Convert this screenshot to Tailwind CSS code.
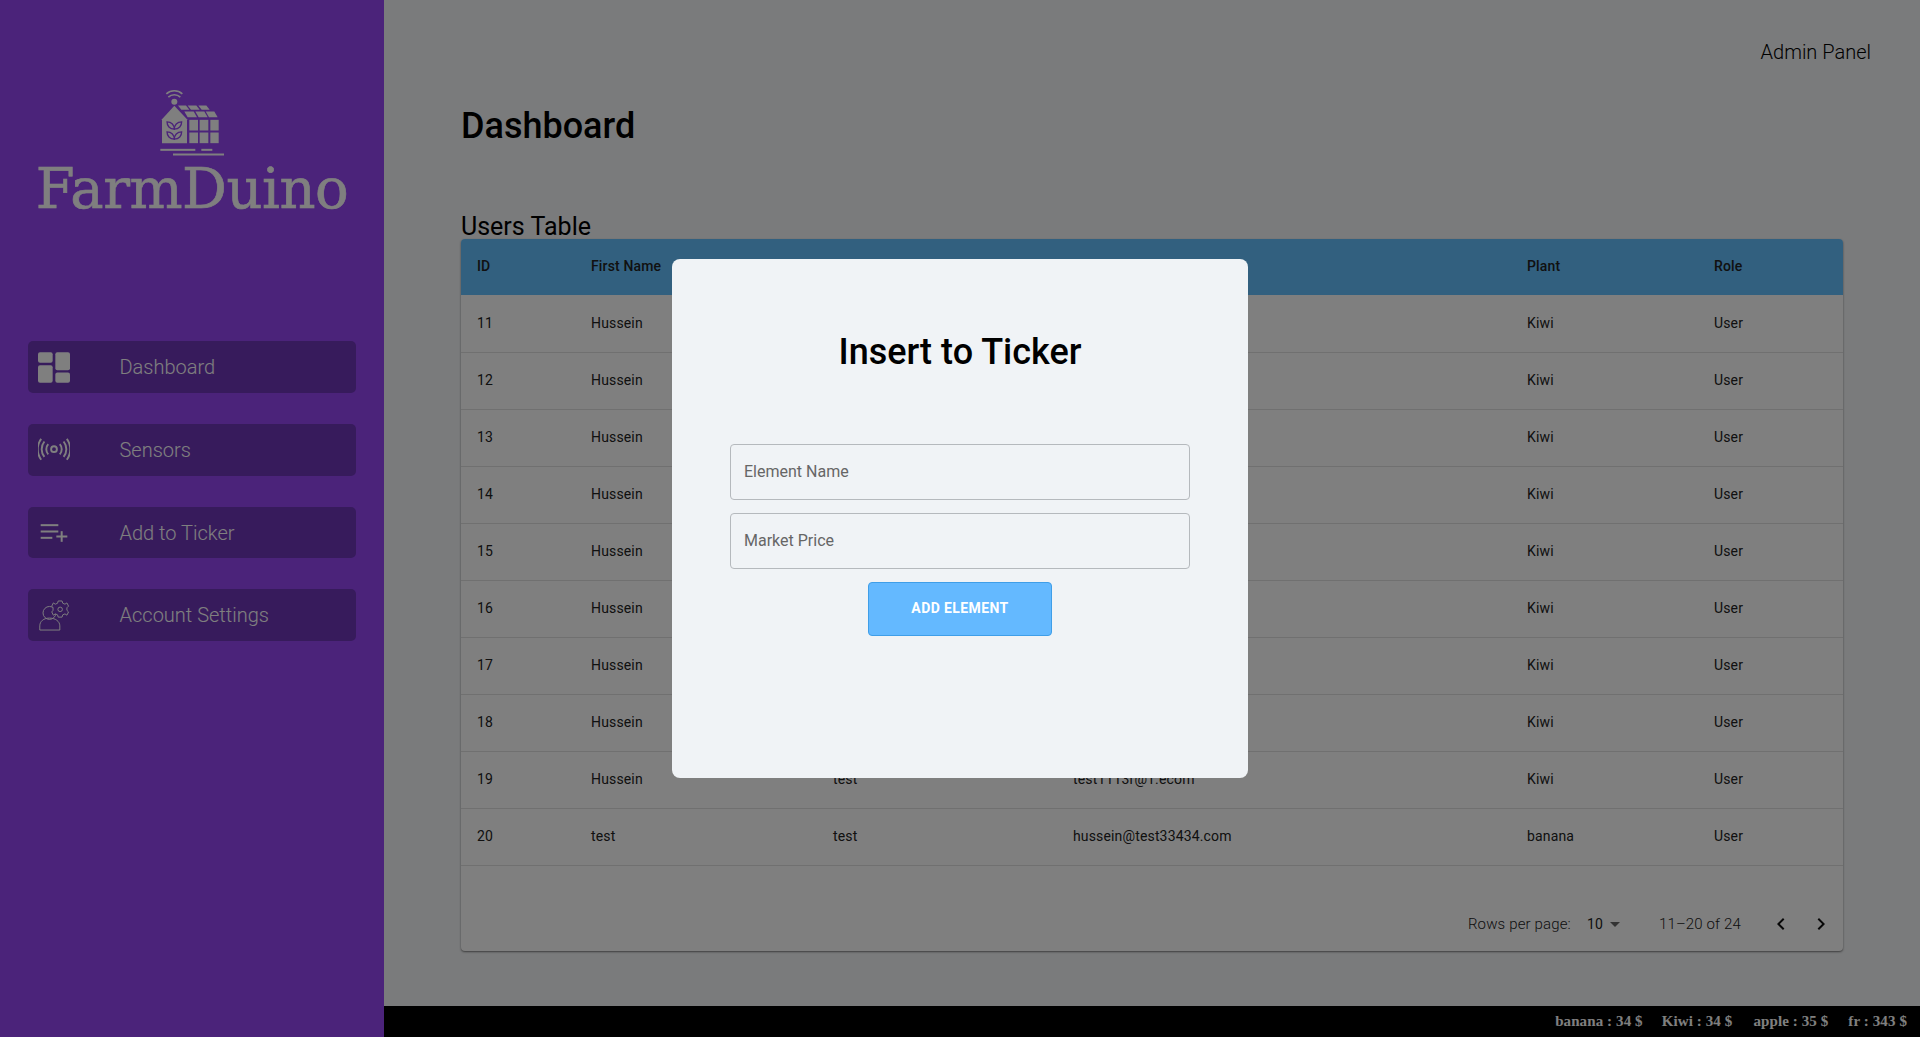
<!DOCTYPE html>
<html lang="en">
<head>
  <meta charset="UTF-8" />
  <meta name="viewport" content="width=device-width, initial-scale=1.0" />
  <title>FarmDuino Dashboard</title>
  <script src="https://cdn.jsdelivr.net/npm/@tailwindcss/browser@4"></script>
</head>
<body class="font-['Roboto',sans-serif] bg-[#f4f6f8] text-black overflow-hidden">

  <div class="relative flex h-[1037px] w-[1920px]">

    <!-- Sidebar -->
    <aside class="w-[384px] shrink-0 bg-[#9646f4] text-white flex flex-col">
      <div class="flex flex-col items-center pt-[88px] h-[341px]">
        <svg class="w-[70px] h-[72px]" viewBox="470 85 210 215" fill="#ffffff">
          <g fill="none" stroke="#ffffff" stroke-width="5">
            <path d="M498 102a36 36 0 0 1 48 0" />
            <path d="M504 112a26 26 0 0 1 36 0" />
          </g>
          <circle cx="522" cy="126" r="9" />
          <path d="M485 178L522 138L560 178V250H485Z" />
          <path d="M533 137H557L567 150H543Z" />
          <path d="M562 137H588L598 150H572Z" />
          <path d="M594 137H618L628 150H604Z" />
          <path d="M552 155H580L590 172H562Z" />
          <path d="M585 155H612L622 172H595Z" />
          <path d="M616 155H642L652 172H626Z" />
          <rect x="567" y="180" width="26" height="32" />
          <rect x="598" y="180" width="26" height="32" />
          <rect x="630" y="180" width="25" height="32" />
          <rect x="567" y="218" width="26" height="32" />
          <rect x="598" y="218" width="26" height="32" />
          <rect x="630" y="218" width="25" height="32" />
          <g fill="none" stroke="#9646f4" stroke-width="4">
            <path d="M522 208C508 208 500 198 500 186C514 186 522 196 522 208Z" />
            <path d="M522 208C536 208 544 198 544 186C530 186 522 196 522 208Z" />
            <path d="M522 238C508 238 500 228 500 216C514 216 522 226 522 238Z" />
            <path d="M522 238C536 238 544 228 544 216C530 216 522 226 522 238Z" />
          </g>
          <rect x="480" y="267" width="105" height="6" />
          <rect x="603" y="267" width="33" height="6" />
          <rect x="518" y="281" width="153" height="6" />
        </svg>
        <div class="font-['DejaVu_Serif',serif] text-[56px] leading-[60px] tracking-[-0.5px] font-normal -mt-[1px] [-webkit-text-stroke:0.6px_white]">FarmDuino</div>
      </div>

      <nav class="flex flex-col gap-[31px] px-[28px]">
        <a class="flex items-center h-[51.8px] rounded-[5px] bg-[#6e36b8] pl-[10px]">
          <span class="w-[32px] flex justify-center">
            <svg class="w-[32px] h-[31px] mt-[1px]" viewBox="114 96 96 92" fill="#ffffff">
              <rect x="114" y="96" width="44" height="32" rx="6" />
              <rect x="114" y="135" width="44" height="53" rx="6" />
              <rect x="166" y="96" width="44" height="54" rx="6" />
              <rect x="166" y="157" width="44" height="31" rx="6" />
            </svg>
          </span>
          <span class="ml-[49.5px] text-[20px] font-light">Dashboard</span>
        </a>
        <a class="flex items-center h-[51.8px] rounded-[5px] bg-[#6e36b8] pl-[10px]">
          <span class="w-[32px] flex justify-center">
            <svg class="w-[32px] h-[23px]" viewBox="112 354 100 70" fill="none" stroke="#ffffff" stroke-width="6">
              <circle cx="162" cy="388" r="9" />
              <path d="M144 372a24 24 0 0 0 0 32" />
              <path d="M180 372a24 24 0 0 1 0 32" />
              <path d="M132 364a38 38 0 0 0 0 48" />
              <path d="M192 364a38 38 0 0 1 0 48" />
              <path d="M122 356a54 54 0 0 0 0 65" />
              <path d="M202 356a54 54 0 0 1 0 65" />
            </svg>
          </span>
          <span class="ml-[49.5px] text-[20px] font-light">Sensors</span>
        </a>
        <a class="flex items-center h-[51.8px] rounded-[5px] bg-[#6e36b8] pl-[10px]">
          <span class="w-[32px] flex justify-center">
            <svg class="w-[32px] h-[27px]" viewBox="114 600 96 80" fill="none" stroke="#ffffff" stroke-width="6">
              <path d="M122 618H175" />
              <path d="M122 637H175" />
              <path d="M122 656H157" />
              <path d="M169 652H202" />
              <path d="M185 636V668" />
            </svg>
          </span>
          <span class="ml-[49.5px] pt-[1px] text-[20px] font-light">Add to Ticker</span>
        </a>
        <a class="flex items-center h-[51.8px] rounded-[5px] bg-[#6e36b8] pl-[10px]">
          <span class="w-[32px] flex justify-center">
            <svg class="w-[32px] h-[31px]" viewBox="114 838 96 96" fill="none" stroke="#ffffff" stroke-width="3">
              <circle cx="148" cy="878" r="20" />
              <path d="M118 931V918c0-14 12-24 30-24s32 10 32 24V931Z" />
              <path d="M175 841h12l2 7 7 3 6-4 5 10-5 5v8l5 5-5 10-6-4-7 3-2 7h-12l-2-7-7-3-6 4-5-10 4-5v-8l-4-5 5-10 6 4 7-3Z" fill="#6e36b8" />
              <circle cx="181" cy="867" r="7" />
            </svg>
          </span>
          <span class="ml-[49.5px] text-[20px] font-light">Account Settings</span>
        </a>
      </nav>
    </aside>

    <!-- Main -->
    <main class="flex-1 flex flex-col min-w-0">
      <div class="flex justify-end pt-[40px] pr-[49px]">
        <span class="text-[20px] leading-[24px] font-light">Admin Panel</span>
      </div>

      <div class="flex-1 pl-[77px] pr-[77px]">
        <h1 class="mt-[41px] text-[36px] leading-[42px] font-medium">Dashboard</h1>
        <h2 class="mt-[66px] text-[25px] leading-[28px] font-normal">Users Table</h2>

        <div class="-mt-[2px] w-[1382px] h-[712px] bg-white rounded-[4px] shadow-[0_1px_2px_rgba(0,0,0,0.5)] overflow-hidden">
          <table class="w-full table-fixed text-[14px] tracking-[0.15px] text-[#222] text-left">
            <colgroup>
              <col class="w-[114px]" /><col class="w-[242px]" /><col class="w-[240px]" /><col class="w-[454px]" /><col class="w-[187px]" /><col class="w-[145px]" />
            </colgroup>
            <thead class="bg-[#64c0fe]">
              <tr class="h-[56px]">
                <th class="pl-[16px] pb-[1px] font-medium">ID</th>
                <th class="pl-[16px] pb-[1px] font-medium">First Name</th>
                <th class="pl-[16px] pb-[1px] font-medium">Last Name</th>
                <th class="pl-[16px] pb-[1px] font-medium">Email</th>
                <th class="pl-[16px] pb-[1px] font-medium">Plant</th>
                <th class="pl-[16px] pb-[1px] font-medium">Role</th>
              </tr>
            </thead>
            <tbody>
              <tr class="h-[57px] border-b border-[#e0e0e0]"><td class="pl-[16px]">11</td><td class="pl-[16px]">Hussein</td><td class="pl-[16px]">test</td><td class="pl-[16px]">test1111r@1.ecom</td><td class="pl-[16px]">Kiwi</td><td class="pl-[16px]">User</td></tr>
              <tr class="h-[57px] border-b border-[#e0e0e0]"><td class="pl-[16px]">12</td><td class="pl-[16px]">Hussein</td><td class="pl-[16px]">test</td><td class="pl-[16px]">test1112r@1.ecom</td><td class="pl-[16px]">Kiwi</td><td class="pl-[16px]">User</td></tr>
              <tr class="h-[57px] border-b border-[#e0e0e0]"><td class="pl-[16px]">13</td><td class="pl-[16px]">Hussein</td><td class="pl-[16px]">test</td><td class="pl-[16px]">test1113r@1.ecom</td><td class="pl-[16px]">Kiwi</td><td class="pl-[16px]">User</td></tr>
              <tr class="h-[57px] border-b border-[#e0e0e0]"><td class="pl-[16px]">14</td><td class="pl-[16px]">Hussein</td><td class="pl-[16px]">test</td><td class="pl-[16px]">test1114r@1.ecom</td><td class="pl-[16px]">Kiwi</td><td class="pl-[16px]">User</td></tr>
              <tr class="h-[57px] border-b border-[#e0e0e0]"><td class="pl-[16px]">15</td><td class="pl-[16px]">Hussein</td><td class="pl-[16px]">test</td><td class="pl-[16px]">test1115r@1.ecom</td><td class="pl-[16px]">Kiwi</td><td class="pl-[16px]">User</td></tr>
              <tr class="h-[57px] border-b border-[#e0e0e0]"><td class="pl-[16px]">16</td><td class="pl-[16px]">Hussein</td><td class="pl-[16px]">test</td><td class="pl-[16px]">test1116r@1.ecom</td><td class="pl-[16px]">Kiwi</td><td class="pl-[16px]">User</td></tr>
              <tr class="h-[57px] border-b border-[#e0e0e0]"><td class="pl-[16px]">17</td><td class="pl-[16px]">Hussein</td><td class="pl-[16px]">test</td><td class="pl-[16px]">test1117r@1.ecom</td><td class="pl-[16px]">Kiwi</td><td class="pl-[16px]">User</td></tr>
              <tr class="h-[57px] border-b border-[#e0e0e0]"><td class="pl-[16px]">18</td><td class="pl-[16px]">Hussein</td><td class="pl-[16px]">test</td><td class="pl-[16px]">test1118r@1.ecom</td><td class="pl-[16px]">Kiwi</td><td class="pl-[16px]">User</td></tr>
              <tr class="h-[57px] border-b border-[#e0e0e0]"><td class="pl-[16px]">19</td><td class="pl-[16px]">Hussein</td><td class="pl-[16px]">test</td><td class="pl-[16px]">test1113r@1.ecom</td><td class="pl-[16px]">Kiwi</td><td class="pl-[16px]">User</td></tr>
              <tr class="h-[57px] border-b border-[#e0e0e0]"><td class="pl-[16px]">20</td><td class="pl-[16px]">test</td><td class="pl-[16px]">test</td><td class="pl-[16px]">hussein@test33434.com</td><td class="pl-[16px]">banana</td><td class="pl-[16px]">User</td></tr>
            </tbody>
          </table>

          <!-- Pagination -->
          <div class="flex items-center justify-end h-[85px] pt-[32px] pr-[10px] text-[15px] tracking-[0.15px] font-light text-[#222]">
            <span>Rows per page:</span>
            <span class="ml-[16px] text-[14px] font-normal">10</span>
            <svg class="w-[24px] h-[24px]" viewBox="0 0 24 24" fill="#666666"><path d="M7 10l5 5 5-5z" /></svg>
            <span class="ml-[32px]">11–20 of 24</span>
            <div class="ml-[28px] flex gap-[16px]">
              <svg class="w-[24px] h-[24px]" viewBox="0 0 24 24" fill="#111111"><path d="M15.41 7.41L14 6l-6 6 6 6 1.41-1.41L10.83 12z" /></svg>
              <svg class="w-[24px] h-[24px]" viewBox="0 0 24 24" fill="#111111"><path d="M10 6L8.59 7.41 13.17 12l-4.58 4.59L10 18l6-6z" /></svg>
            </div>
          </div>
        </div>
      </div>

      <!-- Ticker -->
      <div class="h-[31px] bg-black text-white flex items-center justify-end gap-[20px] pr-[13px] font-['Liberation_Serif',serif] text-[15px] tracking-[0.1px] font-bold">
        <span>banana : 34 $</span>
        <span class="-translate-x-[1px]">Kiwi : 34 $</span>
        <span>apple : 35 $</span>
        <span>fr : 343 $</span>
      </div>
    </main>

    <!-- Modal -->
    <div class="absolute inset-0 bg-black/50 flex items-center justify-center">
      <div class="w-[576px] h-[519px] bg-[#f0f3f6] rounded-[8px] flex flex-col items-center px-[58px] pt-[71px]">
        <h2 class="text-[36px] leading-[44px] font-medium">Insert to Ticker</h2>
        <input class="mt-[70px] w-full h-[56px] border border-[#b5b9bd] rounded-[4px] pl-[13px] pr-[12px] pb-[1px] text-[16px] font-normal bg-transparent placeholder:text-[#666]" placeholder="Element Name" />
        <input class="mt-[13px] w-full h-[56px] border border-[#b5b9bd] rounded-[4px] pl-[13px] pr-[12px] pb-[1px] text-[16px] font-normal bg-transparent placeholder:text-[#666]" placeholder="Market Price" />
        <button class="mt-[13px] w-[184px] h-[54px] bg-[#64b9ff] border border-[#3f9ee8] rounded-[4px] text-white text-[14px] tracking-[0.4px] font-bold uppercase pb-[1px]">Add Element</button>
      </div>
    </div>
  </div>

</body>
</html>
